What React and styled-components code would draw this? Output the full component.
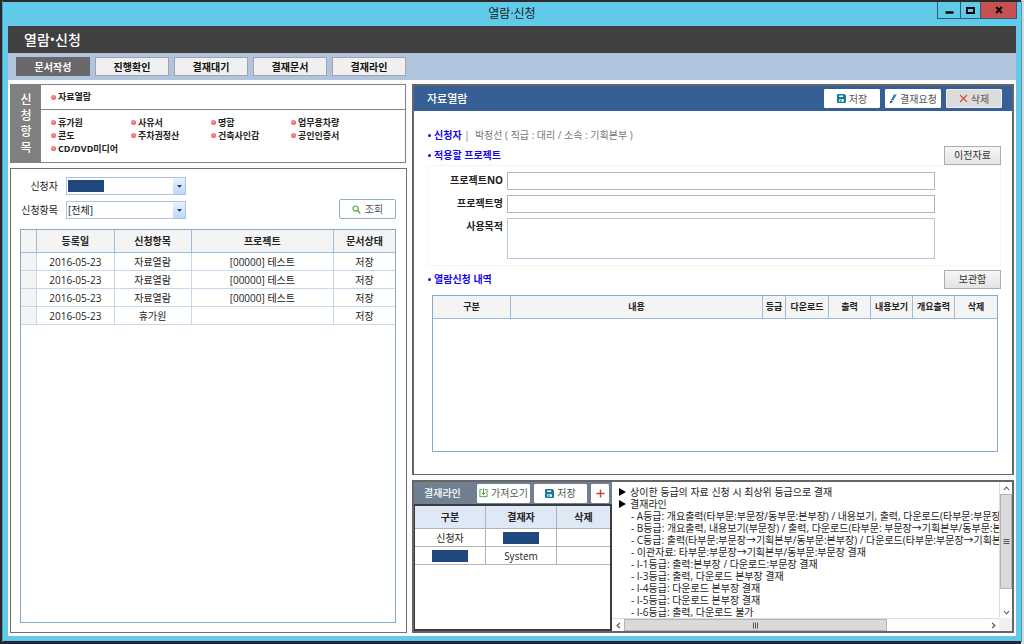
import React from "react";
import styled, { createGlobalStyle, css } from "styled-components";

const GlobalStyle = createGlobalStyle`
  *, *::before, *::after { box-sizing: border-box; }
  html, body, #root { height: 100%; margin: 0; }
  body, button, input, select, textarea {
    font-family: "Open Sans", "Noto Sans CJK KR", sans-serif;
    font-size: 10px;
    line-height: 14px;
    color: #222;
  }
  button, input, select, textarea { margin: 0; padding: 0; border-radius: 0; }
`;

const Desktop = styled.div`
  display: flex;
  min-height: 100%;
  padding: 2px 3px 3px;
  background: linear-gradient(90deg, #26262a 50%, #d8d8dc 50%);
`;

const Window = styled.div`
  flex: 1;
  min-width: 0;
  display: flex;
  flex-direction: column;
  padding: 0 5px 5px;
  background: #62cae9;
  box-shadow: 0 -2px 0 #2b2b2b, 0 3px 0 #2a2438, 0 0 0 1px #4b9db5;
`;

const TitleBar = styled.header`
  display: grid;
  grid-template-columns: 1fr auto 1fr;
  height: 24px;
`;

const WindowTitle = styled.div`
  grid-column: 2;
  font-size: 12px;
  line-height: 23px;
  color: #1d1d1d;
`;

const WindowButtons = styled.div`
  display: flex;
  justify-self: end;
  height: 17px;
  margin-right: -1px;
`;

const WindowButton = styled.button`
  display: grid;
  place-items: center;
  width: ${(p) => p.$width}px;
  height: 17px;
  border: 1px solid #2f5d70;
  border-top: 0;
  margin-left: -1px;
  background: ${(p) => (p.$close ? "#c75050" : "transparent")};
`;

const AppHeader = styled.h1`
  margin: 0;
  padding-left: 16px;
  height: 27px;
  background: #404040;
  color: #fff;
  font-size: 14px;
  line-height: 27px;
  font-weight: 500;
`;

const Tabs = styled.nav`
  display: flex;
  gap: 5px;
  padding: 4px 8px;
  height: 27px;
  background: #b0c4de;
`;

const Tab = styled.button`
  width: 74px;
  height: 19px;
  border: 1px solid ${(p) => (p.$active ? "#696969" : "#a0a4a8")};
  background: ${(p) => (p.$active ? "#696969" : "#f0f0f0")};
  color: ${(p) => (p.$active ? "#fff" : "#111")};
  font-weight: 700;
`;

const Main = styled.main`
  flex: 1;
  min-height: 0;
  display: grid;
  grid-template-columns: 397fr 602fr;
  gap: 5px;
  padding: 4px 2px 3px;
  background: #fcfcfe;
`;

const Column = styled.div`
  display: flex;
  flex-direction: column;
  gap: 5px;
  min-width: 0;
`;

const ItemPanel = styled.section`
  display: flex;
  height: 79px;
  margin-right: 1px;
  border: 1px solid #808080;
  background: #fff;
`;

const ItemTitle = styled.h2`
  display: flex;
  flex-direction: column;
  align-items: center;
  justify-content: center;
  width: 30px;
  margin: 0;
  background: #808080;
  color: #fff;
  font-size: 12px;
  line-height: 16px;
  font-weight: 500;
`;

const ItemBody = styled.div`
  flex: 1;
`;

const ItemList = styled.ul`
  display: grid;
  grid-template-columns: repeat(4, 80px);
  margin: 0;
  padding: ${(p) => (p.$first ? "5px 10px" : "6px 10px")};
  list-style: none;
  border-bottom: ${(p) => (p.$first ? "1px solid #808080" : "0")};
`;

const ItemLink = styled.a`
  display: flex;
  align-items: center;
  gap: 2px;
  height: ${(p) => (p.$tall ? 14 : 13)}px;
  color: #222;
  font-size: 9px;
  font-weight: 700;
  text-decoration: none;
  white-space: nowrap;
  &::before {
    content: "";
    width: 5px;
    height: 5px;
    border-radius: 50%;
    background: radial-gradient(circle at 40% 40%, #ff9aa0, #e04050);
  }
`;

const SearchPanel = styled.section`
  flex: 1;
  display: flex;
  flex-direction: column;
  padding: 8px 10px 9px 9px;
  border: 1px solid #707070;
  background: #fff;
`;

const SearchForm = styled.form`
  display: flex;
  align-items: flex-end;
  justify-content: space-between;
  padding-bottom: 10px;
`;

const SearchFields = styled.div`
  display: grid;
  grid-template-columns: 38px 120px;
  column-gap: 8px;
  row-gap: 6px;
  align-items: center;
`;

const FieldLabel = styled.label`
  text-align: right;
  white-space: nowrap;
  color: #222;
`;

const SelectBox = styled.div`
  position: relative;
  height: 18px;
`;

const Select = styled.select`
  width: 100%;
  height: 18px;
  padding: 0 14px 0 1px;
  border: 1px solid #a9c4e4;
  background: #fff;
  appearance: none;
`;

const SelectArrow = styled.span`
  position: absolute;
  top: 1px;
  right: 1px;
  bottom: 1px;
  width: 12px;
  display: grid;
  place-items: center;
  background: linear-gradient(#eaf3fe, #bcd8f8);
  pointer-events: none;
`;

const redaction = css`
  background: #1f497d;
  width: 36px;
  height: 12px;
`;

const SelectMask = styled.span`
  ${redaction}
  position: absolute;
  top: 3px;
  left: 2px;
  pointer-events: none;
`;

const Mask = styled.span`
  ${redaction}
  display: block;
  margin: 0 auto;
`;

const SearchButton = styled.button`
  display: flex;
  align-items: center;
  justify-content: center;
  gap: 4px;
  width: 57px;
  height: 20px;
  border: 1px solid #8db2c9;
  border-radius: 2px;
  background: #fff;
  color: #555;
`;

const GridFrame = styled.div`
  flex: ${(p) => (p.$fixed ? "none" : 1)};
  height: ${(p) => (p.$fixed ? "157px" : "auto")};
  border: 1px solid #84a9d3;
  background: #fff;
`;

const DataTable = styled.table`
  width: 100%;
  border-collapse: separate;
  border-spacing: 0;
  table-layout: fixed;
  th, td {
    padding: 0;
    text-align: center;
    white-space: nowrap;
    border: 0 solid #c5d9ee;
    border-width: 0 1px 1px 0;
  }
  th {
    height: 23px;
    background: #f4f4f4;
    border-color: #9dbbdc;
    font-size: ${(p) => (p.$small ? 9 : 10)}px;
    font-weight: 700;
  }
  td { height: 18px; }
  th:last-child, td:last-child { border-right: 0; }
  tbody td:first-child { background: #f4f4f4; }
`;

const LineTable = styled(DataTable)`
  th, td { border-color: #b4b4b4; }
  th { background: #dfe9f5; }
  tbody td:first-child { background: #fff; }
`;

const DetailPanel = styled.section`
  flex: 1;
  display: flex;
  flex-direction: column;
  border: 1px solid #666;
  border-left-width: 2px;
  border-right-width: 2px;
  background: #fff;
`;

const DetailHeader = styled.header`
  display: flex;
  align-items: center;
  gap: 5px;
  height: 26px;
  padding: 0 10px 0 13px;
  background: #365f95;
  border-top: 1px solid #666;
`;

const DetailTitle = styled.h2`
  flex: 1;
  margin: 0;
  color: #fff;
  font-size: 11px;
  font-weight: 500;
`;

const ToolButton = styled.button`
  display: flex;
  align-items: center;
  justify-content: center;
  gap: 3px;
  width: ${(p) => p.$width || 56}px;
  height: 19px;
  border: 1px solid ${(p) => (p.$muted ? "#f0f0f0" : "#fff")};
  border-radius: 1px;
  background: ${(p) => (p.$muted ? "#dcdcdc" : "#fff")};
  color: #555;
  white-space: nowrap;
`;

const DetailBody = styled.div`
  flex: 1;
  padding: 14px 11px 22px 13px;
`;

const Line = styled.div`
  display: flex;
  align-items: center;
  justify-content: space-between;
  height: 20px;
`;

const BlueHeading = styled.h3`
  margin: 0;
  color: #1508e8;
  font-size: 10px;
  font-weight: 700;
  white-space: pre;
  &::before {
    content: "";
    display: inline-block;
    width: 3px;
    height: 3px;
    margin: 0 3px 1px 1px;
    border-radius: 50%;
    background: #2218a0;
    vertical-align: middle;
  }
`;

const Applicant = styled.span`
  color: #777;
  font-weight: 400;
`;

const GrayButton = styled.button`
  width: 57px;
  height: 19px;
  border: 1px solid #adadad;
  background: linear-gradient(#f6f6f6, #e4e4e4);
  color: #333;
`;

const ProjectForm = styled.form`
  display: grid;
  grid-template-columns: 75px 1fr;
  column-gap: 4px;
  row-gap: 5px;
  margin-bottom: 3px;
  padding: 6px 65px 6px 0;
  border: 1px solid #f6f6f6;
`;

const BoldLabel = styled(FieldLabel)`
  padding-top: 1px;
  font-weight: 700;
`;

const TextInput = styled.input`
  width: 100%;
  height: 18px;
  border: 1px solid #b8b4b0;
  background: #fff;
`;

const TextArea = styled.textarea`
  display: block;
  width: 100%;
  height: 41px;
  border: 1px solid #b0c8e0;
  background: #fff;
  resize: none;
`;

const DetailGrid = styled.div`
  padding: 6px 3px 0 5px;
`;

const BottomPanel = styled.section`
  display: grid;
  grid-template-columns: 198fr 400fr;
  height: 153px;
  border: 2px solid #666;
  background: #fff;
`;

const LinePanel = styled.div`
  display: flex;
  flex-direction: column;
  min-width: 0;
`;

const LineHeader = styled.header`
  display: flex;
  align-items: center;
  gap: 4px;
  height: 22px;
  padding: 0 3px 0 10px;
  background: #708090;
`;

const LineTitle = styled.h2`
  flex: 1;
  margin: 0;
  color: #fff;
  font-size: 10px;
  font-weight: 500;
  white-space: nowrap;
`;

const LineBody = styled.div`
  flex: 1;
  border: 2px solid #3c3c3c;
  border-left-width: 1px;
`;

const Notes = styled.div`
  display: grid;
  grid-template-columns: minmax(0, 1fr) 13px;
  grid-template-rows: minmax(0, 1fr) 13px;
  min-width: 0;
  min-height: 0;
`;

const NoteText = styled.div`
  overflow: hidden;
  padding: 4px 0 0 7px;
`;

const Note = styled.p`
  display: flex;
  align-items: center;
  gap: 4px;
  height: 12px;
  margin: 0;
  padding-left: ${(p) => (p.$sub ? 12 : 0)}px;
  line-height: 12px;
  white-space: nowrap;
`;

const Scroll = styled.div`
  display: flex;
  flex-direction: ${(p) => (p.$vertical ? "column" : "row")};
  background: #fff;
  border: 1px solid #dcdcdc;
  border-width: ${(p) => (p.$vertical ? "0 0 0 1px" : "1px 0 0 0")};
`;

const ScrollButton = styled.button`
  display: grid;
  place-items: center;
  flex: none;
  width: 12px;
  height: 12px;
  border: 0;
  background: #fff;
`;

const ScrollThumb = styled.div`
  flex: ${(p) => p.$share};
  display: grid;
  place-items: center;
  border: 1px solid #b4b4b4;
  background: #dadada;
`;

const ScrollRest = styled.div`
  flex: ${(p) => p.$share};
`;

const ScrollCorner = styled.div`
  background: #f0f0f0;
`;

const SaveIcon = () => (
  <svg width="9" height="9" viewBox="0 0 9 9" aria-hidden="true">
    <path d="M1 0h6.4L9 1.6V8a1 1 0 0 1-1 1H1a1 1 0 0 1-1-1V1a1 1 0 0 1 1-1z" fill="#16789a" />
    <path d="M2.2 1.4h4v1.6h-4zM2.2 5.2h4.6v2.6H2.2z" fill="#fff" />
    <path d="M3.2 5.8h1.4v2H3.2z" fill="#16789a" />
  </svg>
);

const PenIcon = () => (
  <svg width="8" height="10" viewBox="0 0 8 10" aria-hidden="true">
    <path d="M5 0.6h2.8L4.2 6.6H1.6z" fill="#1f86b0" />
    <path d="M1.3 7h2.6L2.4 8.8.6 9.6z" fill="#164f73" />
  </svg>
);

const CrossIcon = () => (
  <svg width="9" height="9" viewBox="0 0 9 9" aria-hidden="true">
    <path d="M1 1l7 7M8 1L1 8" stroke="#d84848" strokeWidth="1.2" />
  </svg>
);

const SearchIcon = () => (
  <svg width="9" height="9" viewBox="0 0 9 9" aria-hidden="true" fill="none" stroke="#55a845">
    <circle cx="3.6" cy="3.6" r="2.6" strokeWidth="1.2" />
    <path d="M5.5 5.5l2.6 2.8" strokeWidth="1.6" />
  </svg>
);

const ImportIcon = () => (
  <svg width="9" height="10" viewBox="0 0 10 10" aria-hidden="true" fill="none" stroke="#4f9a45">
    <path d="M3.5 1H1v8h8V1H6.5" />
    <path d="M5 0v6.5M3 4.7l2 2 2-2" strokeWidth="1.1" />
  </svg>
);

const PlusIcon = () => (
  <svg width="9" height="9" viewBox="0 0 9 9" aria-hidden="true">
    <path d="M4.5 0.5v8M0.5 4.5h8" stroke="#d23c3c" strokeWidth="1.4" />
  </svg>
);

const CaretIcon = () => (
  <svg width="5" height="3" viewBox="0 0 5 3" aria-hidden="true">
    <path d="M0 0h5L2.5 3z" fill="#23406e" />
  </svg>
);

const MarkerIcon = () => (
  <svg width="7" height="8" viewBox="0 0 7 8" aria-hidden="true">
    <path d="M0 0l7 4-7 4z" fill="#000" />
  </svg>
);

const Chevron = ({ turn }) => (
  <svg width="7" height="7" viewBox="0 0 7 7" aria-hidden="true">
    <path d="M1 5l2.5-3L6 5" fill="none" stroke="#555" strokeWidth="1.1" transform={`rotate(${turn} 3.5 3.5)`} />
  </svg>
);

const Grip = ({ turn }) => (
  <svg width="7" height="7" viewBox="0 0 7 7" aria-hidden="true">
    <path d="M0.5 1.5h6M0.5 3.5h6M0.5 5.5h6" stroke="#555" transform={`rotate(${turn} 3.5 3.5)`} />
  </svg>
);

const tabs = ["문서작성", "진행확인", "결재대기", "결재문서", "결재라인"];
const items = ["휴가원", "사유서", "명함", "업무용차량", "콘도", "주차권정산", "건축사인감", "공인인증서", "CD/DVD미디어"];
const documents = [
  ["2016-05-23", "자료열람", "[00000] 테스트", "저장"],
  ["2016-05-23", "자료열람", "[00000] 테스트", "저장"],
  ["2016-05-23", "자료열람", "[00000] 테스트", "저장"],
  ["2016-05-23", "휴가원", "", "저장"],
];
const detailColumns = [
  ["구분", 78], ["내용", 252], ["등급", 23], ["다운로드", 43],
  ["출력", 42], ["내용보기", 42], ["개요출력", 42], ["삭제", 42],
];
const notes = [
  "- A등급: 개요출력(타부문:부문장/동부문:본부장) / 내용보기, 출력, 다운로드(타부문:부문장/동부문:본부장) 결재",
  "- B등급: 개요출력, 내용보기(부문장) / 출력, 다운로드(타부문: 부문장→기획본부/동부문:본부장) 결재",
  "- C등급: 출력(타부문:부문장→기획본부/동부문:본부장) / 다운로드(타부문:부문장→기획본부) 결재",
  "- 이관자료: 타부문:부문장→기획본부/동부문:부문장 결재",
  "- I-1등급: 출력:본부장 / 다운로드:부문장 결재",
  "- I-3등급: 출력, 다운로드 본부장 결재",
  "- I-4등급: 다운로드 본부장 결재",
  "- I-5등급: 다운로드 본부장 결재",
  "- I-6등급: 출력, 다운로드 불가",
];

const Columns = ({ widths }) => {
  const total = widths.reduce((a, b) => a + b, 0);
  return (
    <colgroup>
      {widths.map((w, i) => <col key={i} style={{ width: `${(w / total) * 100}%` }} />)}
    </colgroup>
  );
};

export default function App() {
  return (
    <Desktop>
      <GlobalStyle />
      <Window>
        <TitleBar>
          <WindowTitle>열람·신청</WindowTitle>
          <WindowButtons>
            <WindowButton $width={24} aria-label="최소화">
              <svg width="9" height="9" viewBox="0 0 9 9"><path d="M0.5 6.5h8" stroke="#000" strokeWidth="2.4" /></svg>
            </WindowButton>
            <WindowButton $width={21} aria-label="최대화">
              <svg width="9" height="7" viewBox="0 0 9 7"><path d="M1 1h7v5H1z" fill="none" stroke="#000" strokeWidth="1.8" /></svg>
            </WindowButton>
            <WindowButton $width={37} $close aria-label="닫기">
              <svg width="8" height="8" viewBox="0 0 8 8"><path d="M1.2 1l5.6 6M6.8 1L1.2 7" stroke="#000" strokeWidth="2" /></svg>
            </WindowButton>
          </WindowButtons>
        </TitleBar>
        <AppHeader>열람•신청</AppHeader>
        <Tabs>
          {tabs.map((t, i) => <Tab key={t} $active={i === 0}>{t}</Tab>)}
        </Tabs>
        <Main>
          <Column>
            <ItemPanel>
              <ItemTitle>{[..."신청항목"].map((c) => <span key={c}>{c}</span>)}</ItemTitle>
              <ItemBody>
                <ItemList $first>
                  <li><ItemLink href="#view" $tall>자료열람</ItemLink></li>
                </ItemList>
                <ItemList>
                  {items.map((t) => <li key={t}><ItemLink href="#item">{t}</ItemLink></li>)}
                </ItemList>
              </ItemBody>
            </ItemPanel>
            <SearchPanel>
              <SearchForm>
                <SearchFields>
                  <FieldLabel htmlFor="applicant">신청자</FieldLabel>
                  <SelectBox>
                    <Select id="applicant"><option></option></Select>
                    <SelectMask />
                    <SelectArrow><CaretIcon /></SelectArrow>
                  </SelectBox>
                  <FieldLabel htmlFor="kind">신청항목</FieldLabel>
                  <SelectBox>
                    <Select id="kind"><option>[전체]</option></Select>
                    <SelectArrow><CaretIcon /></SelectArrow>
                  </SelectBox>
                </SearchFields>
                <SearchButton type="button"><SearchIcon />조회</SearchButton>
              </SearchForm>
              <GridFrame>
                <DataTable>
                  <Columns widths={[16, 78, 77, 143, 61]} />
                  <thead>
                    <tr><th /><th>등록일</th><th>신청항목</th><th>프로젝트</th><th>문서상태</th></tr>
                  </thead>
                  <tbody>
                    {documents.map((row, i) => (
                      <tr key={i}><td />{row.map((c, j) => <td key={j}>{c}</td>)}</tr>
                    ))}
                  </tbody>
                </DataTable>
              </GridFrame>
            </SearchPanel>
          </Column>
          <Column>
            <DetailPanel>
              <DetailHeader>
                <DetailTitle>자료열람</DetailTitle>
                <ToolButton><SaveIcon />저장</ToolButton>
                <ToolButton><PenIcon />결재요청</ToolButton>
                <ToolButton $muted><CrossIcon />삭제</ToolButton>
              </DetailHeader>
              <DetailBody>
                <Line>
                  <BlueHeading>신청자<Applicant>{" |  박정선 ( 직급 : 대리 / 소속 : 기획본부 )"}</Applicant></BlueHeading>
                </Line>
                <Line>
                  <BlueHeading>적용할 프로젝트</BlueHeading>
                  <GrayButton>이전자료</GrayButton>
                </Line>
                <ProjectForm>
                  <BoldLabel htmlFor="no">프로젝트NO</BoldLabel>
                  <TextInput id="no" />
                  <BoldLabel htmlFor="name">프로젝트명</BoldLabel>
                  <TextInput id="name" />
                  <BoldLabel htmlFor="purpose">사용목적</BoldLabel>
                  <TextArea id="purpose" />
                </ProjectForm>
                <Line>
                  <BlueHeading>열람신청 내역</BlueHeading>
                  <GrayButton>보관함</GrayButton>
                </Line>
                <DetailGrid>
                  <GridFrame $fixed>
                    <DataTable $small>
                      <Columns widths={detailColumns.map((c) => c[1])} />
                      <thead>
                        <tr>{detailColumns.map(([t]) => <th key={t}>{t}</th>)}</tr>
                      </thead>
                    </DataTable>
                  </GridFrame>
                </DetailGrid>
              </DetailBody>
            </DetailPanel>
            <BottomPanel>
              <LinePanel>
                <LineHeader>
                  <LineTitle>결재라인</LineTitle>
                  <ToolButton $width={53}><ImportIcon />가져오기</ToolButton>
                  <ToolButton $width={53}><SaveIcon />저장</ToolButton>
                  <ToolButton $width={18} aria-label="추가"><PlusIcon /></ToolButton>
                </LineHeader>
                <LineBody>
                  <LineTable>
                    <Columns widths={[71, 71, 53]} />
                    <thead>
                      <tr><th>구분</th><th>결재자</th><th>삭제</th></tr>
                    </thead>
                    <tbody>
                      <tr><td>신청자</td><td><Mask /></td><td /></tr>
                      <tr><td><Mask /></td><td>System</td><td /></tr>
                    </tbody>
                  </LineTable>
                </LineBody>
              </LinePanel>
              <Notes>
                <NoteText>
                  <Note><MarkerIcon />상이한 등급의 자료 신청 시 최상위 등급으로 결재</Note>
                  <Note><MarkerIcon />결재라인</Note>
                  {notes.map((t) => <Note key={t} $sub>{t}</Note>)}
                </NoteText>
                <Scroll $vertical>
                  <ScrollButton aria-label="위로"><Chevron turn={0} /></ScrollButton>
                  <ScrollThumb $share={95}><Grip turn={0} /></ScrollThumb>
                  <ScrollRest $share={17} />
                  <ScrollButton aria-label="아래로"><Chevron turn={180} /></ScrollButton>
                </Scroll>
                <Scroll>
                  <ScrollButton aria-label="왼쪽"><Chevron turn={-90} /></ScrollButton>
                  <ScrollThumb $share={260}><Grip turn={90} /></ScrollThumb>
                  <ScrollRest $share={99} />
                  <ScrollButton aria-label="오른쪽"><Chevron turn={90} /></ScrollButton>
                </Scroll>
                <ScrollCorner />
              </Notes>
            </BottomPanel>
          </Column>
        </Main>
      </Window>
    </Desktop>
  );
}
